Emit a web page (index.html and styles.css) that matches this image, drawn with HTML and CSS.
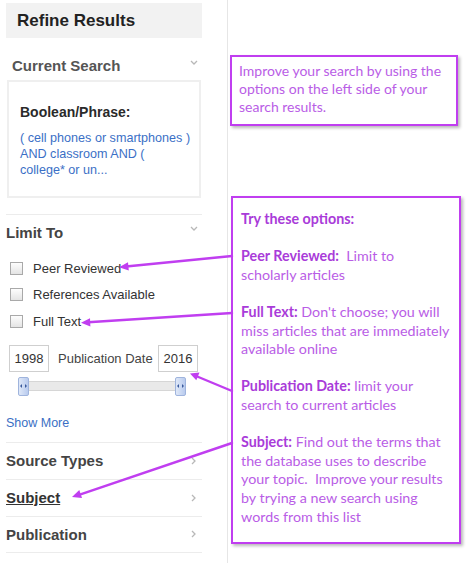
FILE: index.html
```html
<!DOCTYPE html>
<html>
<head>
<meta charset="utf-8">
<link rel="stylesheet" href="styles.css">
</head>
<body>
<div class="page">
  <aside class="sidebar">
    <div class="header">Refine Results</div>

    <div class="sec-title first"><span>Current Search</span>
      <svg class="chev-down" width="8" height="5" viewBox="0 0 8 5"><path d="M1 1 L4 4 L7 1" fill="none" stroke="#b8b8b8" stroke-width="1.3"/></svg>
    </div>
    <div class="search-box">
      <div class="bp">Boolean/Phrase:</div>
      <a class="query">( cell phones or smartphones )<br>AND classroom AND (<br>college* or un...</a>
    </div>

    <div class="rule"></div>

    <div class="sec-title limit"><span>Limit To</span>
      <svg class="chev-down" width="8" height="5" viewBox="0 0 8 5"><path d="M1 1 L4 4 L7 1" fill="none" stroke="#b8b8b8" stroke-width="1.3"/></svg>
    </div>
    <ul class="checks">
      <li><span class="cb"></span>Peer Reviewed</li>
      <li><span class="cb"></span>References Available</li>
      <li><span class="cb"></span>Full Text</li>
    </ul>

    <div class="dates">
      <span class="datebox">1998</span>
      <span class="datelabel">Publication Date</span>
      <span class="datebox">2016</span>
    </div>
    <div class="slider">
      <span class="handle"><svg width="7" height="4" viewBox="0 0 7 4"><path d="M0 2 L2 0 L2 4 Z M7 2 L5 0 L5 4 Z" fill="#3a5a9c"/></svg></span>
      <span class="track"></span>
      <span class="handle"><svg width="7" height="4" viewBox="0 0 7 4"><path d="M0 2 L2 0 L2 4 Z M7 2 L5 0 L5 4 Z" fill="#3a5a9c"/></svg></span>
    </div>
    <a class="show-more">Show More</a>

    <div class="collapsed"><span>Source Types</span>
      <svg width="5" height="8" viewBox="0 0 5 8"><path d="M1 1 L4 4 L1 7" fill="none" stroke="#b8b8b8" stroke-width="1.3"/></svg>
    </div>
    <div class="collapsed"><span class="ul">Subject</span>
      <svg width="5" height="8" viewBox="0 0 5 8"><path d="M1 1 L4 4 L1 7" fill="none" stroke="#b8b8b8" stroke-width="1.3"/></svg>
    </div>
    <div class="collapsed last"><span>Publication</span>
      <svg width="5" height="8" viewBox="0 0 5 8"><path d="M1 1 L4 4 L1 7" fill="none" stroke="#b8b8b8" stroke-width="1.3"/></svg>
    </div>
  </aside>

  <main class="notes">
    <div class="note note1">
      Improve your search by using the options on the left side of your search results.
    </div>
    <div class="note note2">
      <p><b>Try these options:</b></p>
      <p><b>Peer Reviewed:</b>&nbsp; Limit to<br>scholarly articles</p>
      <p><b>Full Text:</b> Don't choose; you will miss articles that are immediately available online</p>
      <p><b>Publication Date:</b> limit your search to current articles</p>
      <p><b>Subject:</b> Find out the terms that the database uses to describe your topic.&nbsp; Improve your results by trying a new search using words from this list</p>
    </div>
  </main>

  <svg class="arrows" width="474" height="563" viewBox="0 0 474 563">
    <g stroke="#c03ef0" stroke-width="2.4" fill="none" stroke-linecap="round">
      <line x1="232" y1="256" x2="126" y2="266.5"/>
      <line x1="232" y1="313" x2="88" y2="322.3"/>
      <line x1="232" y1="391" x2="196" y2="376"/>
      <line x1="232" y1="443" x2="79" y2="494.8"/>
    </g>
    <g fill="#c03ef0">
      <polygon points="119,267.2 128,262.2 128.8,270.4"/>
      <polygon points="81,322.8 90,318.2 90.4,326.4"/>
      <polygon points="190,373.5 199.5,372.5 196.3,380.2"/>
      <polygon points="72,497 79.3,490 82,498"/>
    </g>
  </svg>
</div>
</body>
</html>
```

FILE: styles.css
```css
* { box-sizing: border-box; }
html, body { margin: 0; padding: 0; background: #fff; }
body { width: 474px; height: 563px; overflow: hidden; font-family: "Liberation Sans", Arial, sans-serif; }

.page { position: relative; display: flex; width: 474px; height: 563px; }

.sidebar { width: 196px; margin-left: 6px; padding-top: 3px; }

.header {
  height: 35px; line-height: 36px; background: #f2f2f2;
  padding-left: 11px; font-size: 17px; font-weight: bold; color: #222;
}

.sec-title {
  display: flex; justify-content: space-between; align-items: center;
  height: 20px; font-size: 15px; font-weight: bold; color: #555;
  padding-right: 4px;
}
.sec-title.first { margin-top: 17px; padding-left: 6px; }
.sec-title.first .chev-down { margin-top: -6px; }
.sec-title.limit { margin-top: 7px; color: #444; }
.sec-title.limit .chev-down { margin-top: -8px; }

.search-box {
  margin: 5px 1px 0 1px; height: 118px; border: 2px solid #efefef;
  padding: 21px 0 0 11px;
}
.bp { font-size: 14px; font-weight: bold; color: #2a2a2a; line-height: 18px; }
.query { display: block; margin-top: 9px; font-size: 12.6px; line-height: 16px; color: #3b6fc6; white-space: nowrap; }

.rule { margin-top: 16px; border-top: 1px solid #ececec; }

.checks { list-style: none; margin: 13px 0 0 0; padding: 0; }
.checks li {
  display: flex; align-items: center; height: 26.5px;
  font-size: 13px; color: #333; padding-left: 4px;
}
.cb {
  width: 13px; height: 13px; margin-right: 10px;
  border: 1px solid #a9a9a9; background: linear-gradient(#fdfdfd, #e4e4e4);
}

.dates { display: flex; align-items: center; margin-top: 10px; padding-left: 3px; height: 27px; }
.datebox {
  width: 40px; height: 27px; border: 1px solid #cfcfcf; font-size: 13px; color: #333;
  display: flex; align-items: center; justify-content: center;
}
.datelabel { width: 109px; padding-left: 9px; font-size: 13px; color: #444; }

.slider { display: flex; align-items: center; margin-top: 5px; margin-left: 12px; width: 168px; height: 19px; }
.track { flex: 1; height: 10px; background: #e9e9e9; border-top: 1px solid #d6d6d6; border-bottom: 1px solid #d6d6d6; }
.handle {
  width: 11px; height: 19px; border: 1px solid #9fb4dd; border-radius: 2px;
  background: linear-gradient(90deg, #dfe8f8, #b9cbee);
  display: flex; align-items: center; justify-content: center;
}

.show-more { display: block; margin-top: 20px; font-size: 12.5px; line-height: 14px; color: #3a6fc4; border-bottom: 1px solid #ececec; padding-bottom: 12px; }

.collapsed {
  display: flex; justify-content: space-between; align-items: center;
  height: 37px; border-bottom: 1px solid #ececec;
  font-size: 15px; font-weight: bold; color: #444; padding-right: 6px;
}
.collapsed.last { height: 36px; }
.collapsed .ul { text-decoration: underline; color: #333; }

.notes {
  margin-left: 25px; border-left: 1px solid #e6e6e6; width: 246px; height: 563px;
  font-family: Lato, "Open Sans", sans-serif; color: #b95de6;
}
.note {
  border: 2px solid #c03ef0; background: #fff;
  box-shadow: 2px 2px 3px rgba(0,0,0,0.28);
}
.note b { color: #a93bd9; }
.note1 {
  margin-top: 55px; margin-left: 2px; width: 228px; height: 71px;
  padding: 5px 0 0 7px; font-size: 14px; line-height: 18px;
}
.note2 {
  margin-top: 70px; margin-left: 3px; width: 230px; height: 348px;
  padding: 12px 2px 0 8px; font-size: 14.3px; line-height: 18.6px;
}
.note2 p { margin: 0 0 18.6px 0; }

.arrows { position: absolute; left: 0; top: 0; pointer-events: none; }
```
